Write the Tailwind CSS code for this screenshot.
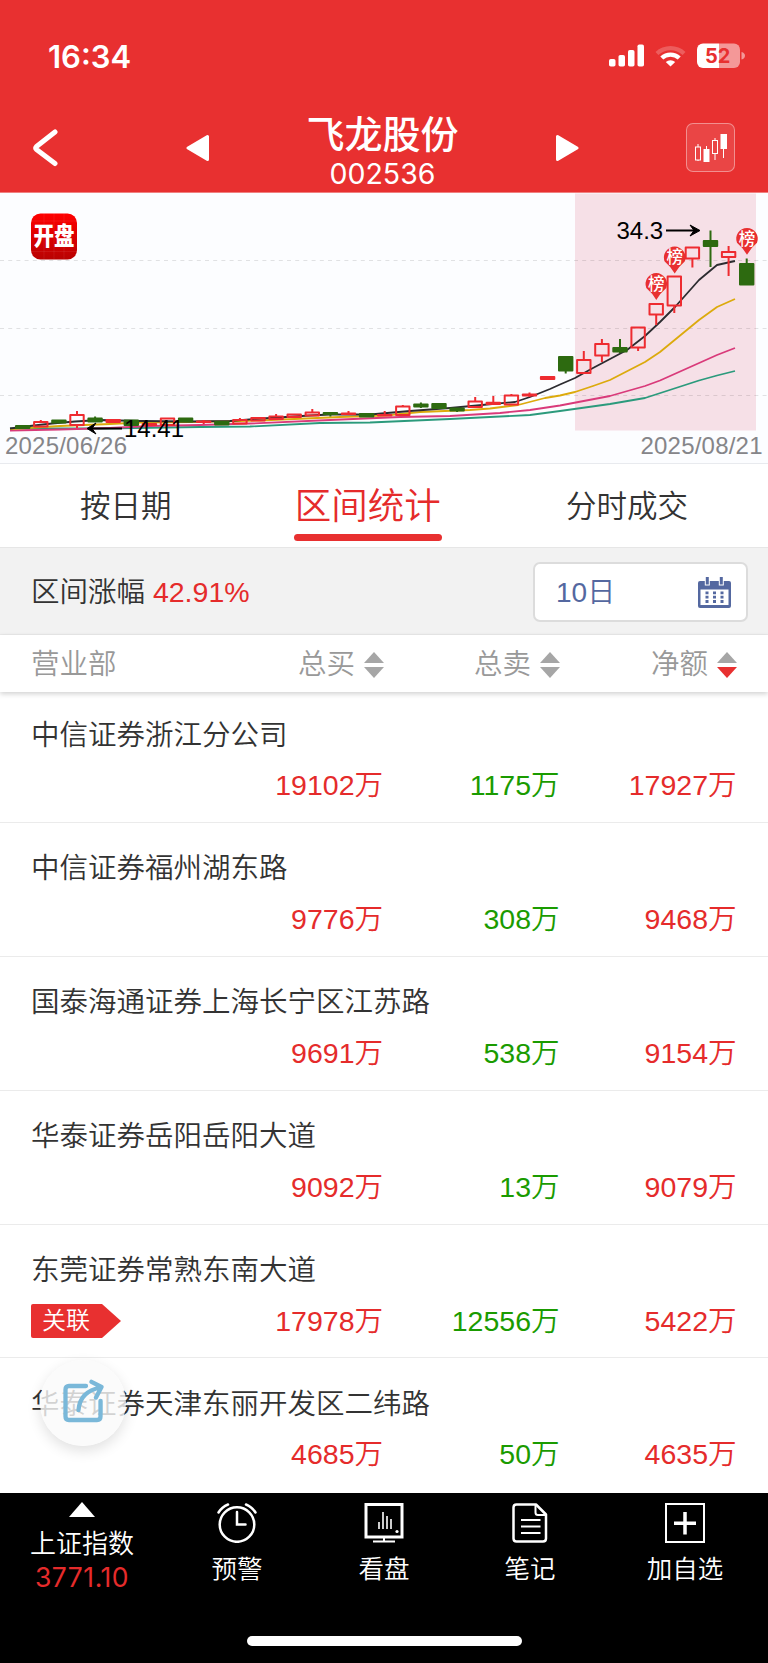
<!DOCTYPE html>
<html lang="zh-CN">
  <head>
    <meta charset="utf-8" />
    <meta name="viewport" content="width=device-width, initial-scale=1" />
    <title>飞龙股份 002536</title>
    <script src="https://cdn.jsdelivr.net/npm/@tailwindcss/browser@4"></script>
  </head>
  <body class="bg-white">
    <div class="relative flex h-[1663px] w-[768px] flex-col overflow-hidden bg-white text-[28.5px] leading-none text-[#333]" style='font-family: "Liberation Sans", "Noto Sans CJK SC", sans-serif;'>

      <!-- Header -->
      <header class="h-[193px] shrink-0 border-b border-[#f08080] bg-[#e83030] text-white">
        <div class="flex h-[112px] items-center justify-between pl-[48px] pr-[23px]">
          <span class="text-[31px] font-semibold" style="font-family: Inter, sans-serif;">16:34</span>
          <svg class="h-[26px] w-[136px]" viewBox="0 0 136 26" fill="#fff">
            <rect x="0" y="16" width="6.5" height="7.5" rx="1.8" />
            <rect x="9.5" y="12" width="6.5" height="11.5" rx="1.8" />
            <rect x="19" y="7" width="6.5" height="16.5" rx="1.8" />
            <rect x="28.5" y="1.5" width="6.5" height="22" rx="1.8" />
            <path d="M46.5 9 A22 22 0 0 1 76.5 9 L73.6 12 A17.6 17.6 0 0 0 49.4 12 Z" opacity=".22" />
            <path d="M51.3 13.6 A14.6 14.6 0 0 1 71.7 13.6 L68.7 16.6 A10.4 10.4 0 0 0 54.3 16.6 Z" />
            <path d="M56.8 19 A7 7 0 0 1 66.2 19 L61.5 23.6 Z" />
            <path d="M94 .5 H110 V25 H94 A6 6 0 0 1 88 19 V6.5 A6 6 0 0 1 94 .5 Z" />
            <path d="M110 .5 H125 A6 6 0 0 1 131 6.5 V19 A6 6 0 0 1 125 25 H110 Z" opacity=".5" />
            <path d="M132.5 9 Q136 10 136 12.8 Q136 15.6 132.5 16.6 Z" opacity=".5" />
            <text x="96" y="19.8" fill="#e83030" font-family="Inter, sans-serif" font-size="20" font-weight="700">52</text>
          </svg>
        </div>
        <div class="flex h-[80px] items-center pl-[32px]">
          <svg class="mt-[-9px] h-[38px] w-[27px]" viewBox="0 0 27 38" fill="none" stroke="#fff" stroke-width="5" stroke-linecap="round" stroke-linejoin="round"><path d="M23 3L4.5 17.5Q3 19 4.5 20.5L23 34.5" /></svg>
          <svg class="mt-[-9px] ml-[127px] h-[28px] w-[24px]" viewBox="0 0 24 28"><path d="M2 14L21.5 2.5V25.5Z" fill="#fff" stroke="#fff" stroke-width="3" stroke-linejoin="round" /></svg>
          <div class="flex w-[345px] flex-col items-center">
            <h1 class="text-[38px] font-medium leading-[42px]">飞龙股份</h1>
            <p class="mt-px text-[28.5px] leading-[34px]" style="font-family: Inter, sans-serif;">002536</p>
          </div>
          <svg class="mt-[-9px] h-[28px] w-[24px]" viewBox="0 0 24 28"><path d="M22 14L2.5 2.5V25.5Z" fill="#fff" stroke="#fff" stroke-width="3" stroke-linejoin="round" /></svg>
          <div class="mt-[-9px] ml-[107px] flex size-[49px] items-center justify-center rounded-[7px] border border-white/40 bg-white/10">
            <svg class="h-[30px] w-[34px]" viewBox="0 0 34 30" fill="#fff" stroke="#fff">
              <path d="M4 11V14M4 27V28M21 5V7M21 21V27M29.5 16V25M12.5 13V16" stroke-width="1" />
              <rect x="1.5" y="14" width="5" height="13" fill="none" />
              <rect x="9.5" y="16" width="6" height="13" stroke="none" />
              <rect x="18.5" y="7.5" width="5" height="13" fill="none" />
              <rect x="26.5" y="1" width="6.5" height="15" stroke="none" />
            </svg>
          </div>
        </div>
      </header>

      <!-- K-line -->
      <section class="h-[271px] shrink-0 border-b border-[#e8eaee] bg-[#fcfdff]">
        <svg class="h-[270px] w-[768px]" viewBox="0 193 768 270" fill="none">
          <defs>
            <linearGradient id="logo" x1="0" y1="0" x2="0" y2="1">
              <stop offset="0" stop-color="#ff0000" />
              <stop offset="1" stop-color="#b80202" />
            </linearGradient>
          </defs>
          <rect x="575" y="193.5" width="181" height="237" fill="#f6e0e7" />
          <path d="M0 260.5H768M0 328.5H768M0 395.5H768" stroke="#000" stroke-opacity=".11" stroke-dasharray="4 4.2" />
          <g stroke-width="1.8" stroke-linejoin="round">
            <path stroke="#2b9a7c" d="M10 428.5L100 428.5L200 427L250 426.5L320 423L370 422.5L450 419L530 415L560 411L610 404L645 398L699 380.5L717 375.5L735 371" />
            <path stroke="#d93a7a" d="M10 430.5L60 429.5L110 428L150 426L200 425L250 423.5L330 420L400 417L450 416L500 413L530 410L560 405.5L610 396L645 386L660 380.5L717 355L735 348" />
            <path stroke="#dcaa0c" d="M10 429L60 426L110 424L140 422.5L190 422L240 421L260 420.5L340 417L385 415.5L420 412L470 410L490 408.5L518 405L545 398L560 395.5L575 392L593 386L610 380L645 362L660 352L699 320L717 307L735 299" />
            <path stroke="#2c2c30" d="M10 428.5L34 425.5L52 423.5L75 421.5L100 420L140 421L190 421.5L230 421L262 418.5L310 415.5L330 414.5L370 414.5L410 411L450 408L482 405L515 402L530 397L550 389L560 384.5L575 378L593 368L610 359L627 350L645 336L660 322L675 307L699 280L717 265L735 261" />
          </g>
          <g id="candles" stroke-width="2" stroke-linejoin="round"></g>

          <g id="pins"></g>

          <g stroke="#000" stroke-width="2">
            <path d="M666 230.5H696M90 428.5H122" />
            <path fill="#000" stroke-width="1" d="M700 230.5L690 225L694 230.5L690 236Z" />
            <path fill="#000" stroke-width="1" d="M87 428.5L96 423L92 428.5L96 434Z" />
          </g>
          <g font-size="24">
            <text x="616.5" y="238.5" fill="#000">34.3</text>
            <text x="124" y="437" fill="#000">14.41</text>
            <text x="5" y="454" fill="#858589" textLength="122">2025/06/26</text>
            <text x="762.5" y="454" fill="#858589" text-anchor="end" textLength="122">2025/08/21</text>
          </g>

          <rect x="31" y="213.5" width="46" height="46" rx="9.5" fill="url(#logo)" />
          <path d="M31 221H77M31 251.5H77M44 213V259M64 213V259M54 213V259" stroke="#fff" stroke-opacity=".07" />
          <text x="54" y="244.8" fill="#fff" font-size="20.5" font-weight="900" text-anchor="middle" transform="translate(0 -48.5) scale(1 1.2)">开盘</text>
        </svg>
      </section>

      <!-- Tabs -->
      <nav class="flex h-[84px] shrink-0 justify-between border-b border-[#e6e6e6] px-[80px] text-[30.5px]">
        <a class="leading-[84px] font-[350]">按日期</a>
        <a class="mr-[2px] flex flex-col items-center pt-[22px] text-[36.5px] leading-[42px] font-[350] text-[#e52b2b]">
          区间统计
          <span class="mt-[6px] h-[6.5px] w-[148px] rounded-full bg-[#e83030]"></span>
        </a>
        <a class="leading-[84px] font-[350]">分时成交</a>
      </nav>

      <!-- Range -->
      <section class="flex h-[87px] shrink-0 items-center justify-between border-b border-[#eaeaea] bg-[#f2f2f2] pl-[31px] pr-[20px]">
        <p class="mt-[3px] font-[350]">区间涨幅 <span class="text-[#e52b2b]">42.91%</span></p>
        <div class="mt-[2px] flex h-[60px] w-[215px] items-center justify-between rounded-[7px] border-2 border-[#dcdcdc] bg-white pl-[21px] pr-[15px] text-[#5468a0]">
          <span class="mt-px font-[350] text-[28px]">10日</span>
          <svg class="h-[31px] w-[33px]" viewBox="0 0 33 31">
            <rect y="4" width="33" height="27" rx="2" fill="#5468a0" />
            <rect x="2.5" y="12.5" width="28" height="15.5" fill="#fff" />
            <path d="M6.8 0H11.8V8.5H6.8ZM20.8 0H25.8V8.5H20.8Z" fill="#fff" />
            <path d="M7.8 0H10.8V7.5H7.8ZM21.8 0H24.8V7.5H21.8Z" fill="#5468a0" />
            <path d="M9 14.5V26.5M16.5 14.5V26.5M24 14.5V26.5" stroke="#5468a0" stroke-width="3" stroke-dasharray="2.8 1.5" />
          </svg>
        </div>
      </section>

      <!-- Table head -->
      <div class="z-10 flex h-[57px] shrink-0 items-center bg-white pl-[31px] pt-[2px] font-[350] text-[#999] shadow-[0_2px_5px_rgba(0,0,0,0.18)]">
        <span class="w-[173px]">营业部</span>
        <div class="flex w-[180px] items-center justify-end gap-[9px]">
          总买
          <svg class="h-[26px] w-[20px]" viewBox="0 0 20 26" fill="#a6a6a6"><path d="M10 0L20 11H0Z" /><path d="M10 26L0 15H20Z" /></svg>
        </div>
        <div class="flex w-[176px] items-center justify-end gap-[9px]">
          总卖
          <svg class="h-[26px] w-[20px]" viewBox="0 0 20 26" fill="#a6a6a6"><path d="M10 0L20 11H0Z" /><path d="M10 26L0 15H20Z" /></svg>
        </div>
        <div class="flex w-[177px] items-center justify-end gap-[9px]">
          净额
          <svg class="h-[26px] w-[20px]" viewBox="0 0 20 26" fill="#a6a6a6"><path d="M10 0L20 11H0Z" /><path d="M10 26L0 15H20Z" fill="#e83030" /></svg>
        </div>
      </div>

      <!-- Rows -->
      <main id="rows" class="mt-[-3px] flex flex-1 flex-col"></main>

      <!-- Share button -->
      <div class="absolute left-[40px] top-[1360px] flex size-[86px] items-center justify-center rounded-full bg-[#fafafa]/80 shadow-[0_5px_14px_rgba(0,0,0,0.12)]">
        <svg class="mt-[-4px] h-[44px] w-[41px]" viewBox="0 0 41 44" fill="none" stroke="#7ab8d9" stroke-width="4.3" stroke-linecap="round" stroke-linejoin="round">
          <path d="M23 7H6Q2.500 7 2.500 10.500V37.500Q2.500 41 6 41H34Q37.500 41 37.500 37.500V22" />
          <path d="M15.500 31C16.500 18 24 11 38 8.500M28.500 2.800L38.500 8L33 18.500" />
        </svg>
      </div>

      <!-- Bottom bar -->
      <footer class="relative flex h-[170px] shrink-0 bg-black text-[25.5px] font-[350] text-white">
        <a class="flex w-[164px] flex-col items-center pt-[9px]">
          <svg class="h-[15px] w-[26px]" viewBox="0 0 26 15" fill="#fff"><path d="M13 0L26 15H0Z" /></svg>
          <span class="mt-[10px] text-[26px] leading-[34px]">上证指数</span>
          <span class="text-[26.5px] leading-[32px] font-normal tracking-[0.02em] text-[#e52b2b]" style="font-family: Inter, sans-serif;">3771.10</span>
        </a>
        <a class="flex w-[146px] flex-col items-center gap-[9px] pt-[10px]">
          <svg class="h-[40px] w-[40px]" viewBox="0 0 40 40" fill="none" stroke="#fff" stroke-width="2.5" stroke-linecap="round">
            <circle cx="20" cy="21.5" r="17.3" />
            <path d="M20 9V21.5H28.5M1.5 9.500Q5 4 11 1.500M38.500 9.500Q35 4 29 1.500" />
          </svg>
          <span class="leading-[34px]">预警</span>
        </a>
        <a class="flex w-[148px] flex-col items-center gap-[9px] pt-[10px]">
          <svg class="h-[40px] w-[40px]" viewBox="0 0 40 40" fill="none" stroke="#fff">
            <rect x="2" y="1.5" width="36" height="32.5" stroke-width="3" />
            <path d="M9 38.5H31M20 34V38" stroke-width="2" />
            <path d="M15 19V26M19 9V26M23 13V26M27 16V26" stroke-width="1.6" />
            <circle cx="33" cy="28.5" r="1.6" fill="#fff" stroke="none" />
          </svg>
          <span class="leading-[34px]">看盘</span>
        </a>
        <a class="flex w-[144px] flex-col items-center gap-[9px] pt-[10px]">
          <svg class="h-[40px] w-[36px]" viewBox="0 0 36 40" fill="none" stroke="#fff" stroke-width="2.5" stroke-linejoin="round">
            <path d="M4.5 1.5H24L34 11.500V35.500Q34 38.500 31 38.500H4.500Q1.500 38.500 1.500 35.500V4.500Q1.500 1.500 4.500 1.500Z" />
            <path d="M23.5 2V9.500Q23.500 12 26 12H33.500" stroke-width="2" />
            <path d="M9 17H28.500M9 23.500H28.500M9 30H28.500" stroke-width="2" />
          </svg>
          <span class="leading-[34px]">笔记</span>
        </a>
        <a class="flex w-[166px] flex-col items-center gap-[9px] pt-[10px]">
          <svg class="h-[40px] w-[40px]" viewBox="0 0 40 40" fill="none" stroke="#fff">
            <rect x="1" y="1" width="38" height="38" stroke-width="2" />
            <path d="M20 9V31.5M9 20.3H31" stroke-width="3.5" />
          </svg>
          <span class="leading-[34px]">加自选</span>
        </a>
        <div class="absolute bottom-[17px] left-[247px] h-[10px] w-[275px] rounded-full bg-white"></div>
      </footer>
    </div>

    <script>
      const RED = "#ee2b30";
      const GREEN = "#2d6a10";

      // [up, bodyTop, bodyBottom, high, low]
      const candles = [
        [0, 426, 428, 426, 428], [1, 422, 426.5, 420, 427], [0, 420.5, 422.5, 420, 423],
        [1, 415, 425, 411, 428], [0, 418.5, 421.5, 416.5, 422], [1, 420, 422, 420, 422],
        [0, 420.5, 425, 420, 425], [1, 424, 425, 424, 425], [1, 418.5, 425, 418, 425],
        [0, 418.5, 421.5, 418, 422], [1, 421.5, 422, 420, 424], [0, 422, 424.5, 421, 425],
        [1, 420, 423.5, 418, 424], [1, 418, 420.5, 417, 421], [1, 416.5, 419, 414, 419],
        [1, 414.5, 417, 414, 417], [1, 412.5, 415.5, 409, 416], [0, 413, 414, 412, 416.5],
        [1, 413.5, 414, 411, 415], [0, 414, 416.5, 413, 417], [1, 415, 415.5, 411, 416],
        [1, 406.5, 415, 405, 415], [0, 404.5, 406.5, 402.5, 408], [0, 404, 408, 403, 408],
        [0, 408.5, 410.5, 408, 412], [1, 401.5, 407, 397, 408], [1, 402.8, 404, 396, 404],
        [1, 395.5, 404.5, 394, 405], [1, 394.5, 395.5, 392.5, 397], [1, 377, 379, 377, 379],
        [0, 357, 370.5, 356, 373.5], [1, 360, 373, 351, 373], [1, 344, 355.5, 339, 362],
        [0, 348, 351.5, 339, 353], [1, 327.5, 347.5, 327, 351], [1, 304, 314.5, 303, 325],
        [1, 276.5, 305.5, 276, 313], [1, 247.5, 258.5, 247, 267.5], [0, 241, 246, 230.5, 267],
        [1, 252, 257, 246, 276], [0, 264, 284.5, 258.5, 285],
      ];
      document.getElementById("candles").innerHTML = candles.map(([up, top, bottom, high, low], i) => {
        const x = 22.7 + i * 18.1;
        const color = up ? RED : GREEN;
        const fill = up && bottom - top > 2.4 ? "none" : color;
        return `<path d="M${x} ${high}V${top}M${x} ${bottom}V${low}" stroke="${color}" />
          <rect x="${x - 6.7}" y="${top}" width="13.4" height="${bottom - top}" stroke="${color}" fill="${fill}" />`;
      }).join("");

      const pins = [[656.3, 284], [674.7, 257.5], [747, 238.8]];
      document.getElementById("pins").innerHTML = pins.map(([x, y]) => `
        <path d="M${x - 10} ${y + 4}A10.8 10.8 0 1 1 ${x + 10} ${y + 4}Q${x + 4} ${y + 9} ${x} ${y + 16}Q${x - 4} ${y + 9} ${x - 10} ${y + 4}Z" fill="#e83030" />
        <text x="${x}" y="${y + 5.7}" fill="#fff" font-size="16.5" font-weight="500" text-anchor="middle">榜</text>`).join("");

      const rows = [
        ["中信证券浙江分公司", 19102, 1175, 17927],
        ["中信证券福州湖东路", 9776, 308, 9468],
        ["国泰海通证券上海长宁区江苏路", 9691, 538, 9154],
        ["华泰证券岳阳岳阳大道", 9092, 13, 9079],
        ["东莞证券常熟东南大道", 17978, 12556, 5422, "关联"],
        ["华泰证券天津东丽开发区二纬路", 4685, 50, 4635],
      ];
      document.getElementById("rows").innerHTML = rows.map(([name, buy, sell, net, tag]) => `
        <div class="flex h-[133.9px] shrink-0 flex-col border-b border-[#ebebeb] pl-[31px] pt-[24.5px] font-[350] last:border-b-0">
          <p class="leading-[42px]">${name}</p>
          <div class="mt-[8.5px] flex h-[42px] items-center leading-[42px]">
            <div class="w-[173px]">
              ${tag ? `<div class="relative flex h-[34px] w-[90px] items-center pl-[11px] text-[24px] text-white">
                <svg class="absolute inset-0 h-[34px] w-[90px]" viewBox="0 0 90 34" fill="#e83030"><path d="M2 0H71L90 17L71 34H2Q0 34 0 32V2Q0 0 2 0Z" /></svg>
                <span class="relative">${tag}</span>
              </div>` : ""}
            </div>
            <span class="w-[179px] text-right text-[#e52b2b]">${buy}万</span>
            <span class="w-[176.5px] text-right text-[#1a9b00]">${sell}万</span>
            <span class="w-[177px] text-right text-[#e52b2b]">${net}万</span>
          </div>
        </div>`).join("");
    </script>
  </body>
</html>
